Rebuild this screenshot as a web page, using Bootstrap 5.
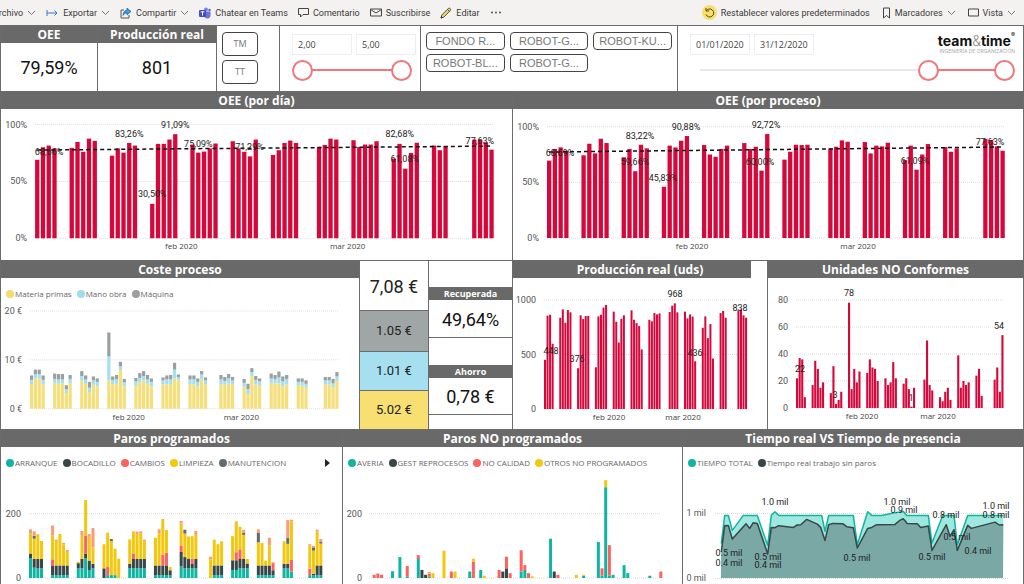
<!DOCTYPE html>
<html lang="es">
<head>
<meta charset="utf-8">
<meta name="viewport" content="width=device-width, initial-scale=1">
<title>Cuadro de mando OEE</title>
<link href="https://cdn.jsdelivr.net/npm/bootstrap@5.3.0/dist/css/bootstrap.min.css" rel="stylesheet">
<style>
:root{--edge:#6b6b6b;--coral:#f0777a;--ui:"Open Sans","Noto Sans",sans-serif;--din:Roboto,"Liberation Sans",sans-serif}
body{font-family:var(--ui);font-size:9px;line-height:12px;color:#333;background:#fff;height:100vh;overflow:hidden}
.toolbar{background:#f3f2f1;height:25px;color:#333}
.tool{font-family:var(--din);font-size:9px;line-height:12px;color:#3b3a39;background:none;border:0;padding:0;display:flex;align-items:center;gap:4px;white-space:nowrap}
.tool svg{flex:none}
.tools{gap:10px}
.tools-end{gap:12px}
.first-tool{margin-left:-7px}
.board{border-right:1px solid var(--edge);border-left:1px solid var(--edge)}
.band{display:grid;border-top:1px solid var(--edge)}
.band>*+*{border-left:1px solid var(--edge)}
.filters{grid-template-columns:96fr 119fr 63fr 141fr 257fr 346fr;height:66px}
.halves{grid-template-columns:511fr 511fr}
.mixed{grid-template-columns:358fr 69fr 84fr 255fr 256fr}
.thirds{grid-template-columns:341fr 340fr 341fr}
.band>*{min-width:0}
.head{background:#696969;color:#fff;font-weight:700;font-size:12px;line-height:17px;height:17px;margin:0;text-align:center;white-space:nowrap}
.head-sm{font-size:9px;line-height:13px;height:13px}
.kpi{font-family:var(--din);font-size:18px;line-height:24px;color:#111;text-align:center}
.kpi-tall{padding-top:13px}
.choice{border:1px solid #444;border-radius:4px;background:#fff;color:#777;padding:0;text-align:center;white-space:nowrap}
.choices{padding:6px 5px;gap:4px}
.choice-unit{width:36px;height:24px;font-size:9px}
.choice-robot{height:18px;font:11px/14px "Liberation Sans",sans-serif}
.robots{display:grid;grid-template-columns:repeat(3,1fr);gap:4px 5px;padding:6px 5px}
.field{border:1px solid #eee;width:60px;height:21px;font-size:9px;color:#444;padding:0 5px;background:#fff}
.dual{position:relative;height:22px}
.dual .rail{position:absolute;left:10px;right:10px;top:10px;height:2px;background:#e8e8e8}
.dual .rail span{display:block;height:2px;margin-left:auto;background:var(--coral)}
.dual input{position:absolute;left:0;top:0;width:100%;height:22px;margin:0;appearance:none;background:none;pointer-events:none}
.dual input::-webkit-slider-thumb{appearance:none;pointer-events:auto;width:21px;height:21px;border-radius:50%;border:2px solid var(--coral);background:#fff}
.brand{font:700 14px/14px Inter,sans-serif;color:#111;text-align:right}
.brand i{font-style:normal;font-weight:300;color:#888}
.brand sup{font-size:6px;font-weight:400;top:-9px}
.tagline{font:5px/6px Inter,sans-serif;color:#aaa;text-align:right}
.plot{display:block;width:100%;height:auto;overflow:visible}
.plot text{font-family:var(--ui);font-size:8px;fill:#444}
.plot .num{font-family:var(--din);font-size:9px;fill:#222}
.plot .axis{font-family:var(--din);font-size:9px;fill:#555}
.legend-row{height:30px;padding-left:5px;padding-top:1px;gap:5px;color:#666;font-size:8px;white-space:nowrap;padding-right:12px}
.legend-row span{display:flex;align-items:center;gap:1px}
.legend-row b{width:8px;height:8px;border-radius:50%}
.costs{display:grid;grid-template-rows:49fr 41fr 39fr 39fr;font-family:var(--din);color:#222;text-align:center}
.costs>div{display:flex;align-items:center;justify-content:center;font-size:13px}
.costs>div+div{border-top:1px solid var(--edge)}
.costs>.sum{font-size:18px;padding-top:2px}
.saving{display:grid;grid-template-rows:26px 13px 38px 27px 13px 37px 1fr}
.saving .kpi{border-bottom:1px solid var(--edge);display:flex;align-items:center;justify-content:center;padding-top:2px}
</style>
</head>
<body>
<nav class="toolbar d-flex align-items-center justify-content-between" aria-label="Acciones del informe">
  <div class="tools d-flex align-items-center">
    <button class="tool first-tool">Archivo <svg width="9" height="6" viewBox="0 0 9 6"><path d="M1 1l3.500 3.500L8 1" fill="none" stroke="#777"/></svg></button>
    <button class="tool"><svg width="13" height="10" viewBox="0 0 13 10"><path d="M1 2v6M1 5h10M8.500 2.500L11 5 8.500 7.500" fill="none" stroke="#2b7cc4"/></svg>Exportar <svg width="9" height="6" viewBox="0 0 9 6"><path d="M1 1l3.500 3.500L8 1" fill="none" stroke="#777"/></svg></button>
    <button class="tool"><svg width="12" height="12" viewBox="0 0 12 12"><path d="M4 3H1v8h8V8" fill="none" stroke="#555"/><path d="M7 1l4 3.500L7 8V6C5 6 4 7 3 8.500 3 5 5 3.200 7 3z" fill="#3f97dc" stroke="#1868ae" stroke-width=".7"/></svg>Compartir <svg width="9" height="6" viewBox="0 0 9 6"><path d="M1 1l3.500 3.500L8 1" fill="none" stroke="#777"/></svg></button>
    <button class="tool"><svg width="12" height="12" viewBox="0 0 12 12"><circle cx="7" cy="2.500" r="2" fill="#7b83eb"/><circle cx="10.500" cy="3" r="1.200" fill="#5059c9"/><path d="M5 4.500h6.500V8c0 2-1 3.500-3 3.500S5 10 5 8z" fill="#6b73dd"/><rect y="3" width="7" height="7" rx="1" fill="#464eb8"/><path d="M1.700 4.800h3.600M3.500 4.800v3.700" stroke="#fff"/></svg>Chatear en Teams</button>
    <button class="tool"><svg width="11" height="11" viewBox="0 0 11 11"><path d="M.5 1.500h10v6H5L2.500 10V7.500h-2z" fill="none" stroke="#444"/></svg>Comentario</button>
    <button class="tool"><svg width="12" height="9" viewBox="0 0 12 9"><path d="M.5 1h11v7H.5zM.5 1.500L6 5l5.500-3.500" fill="none" stroke="#444"/></svg>Suscribirse</button>
    <button class="tool"><svg width="12" height="12" viewBox="0 0 12 12"><path d="M1 11l.8-3L8.500 1.300c1-.8 2.700.8 2 1.900L4 10z" fill="#f0d66a" stroke="#444" stroke-width=".9"/><path d="M7.500 2.500l2 2M1 11l1.500-.4-1-1z" stroke="#333" fill="#333" stroke-width=".8"/></svg>Editar</button>
    <button class="tool" aria-label="Más opciones"><svg width="12" height="3" viewBox="0 0 12 3"><g fill="#444"><circle cx="2" cy="1.500" r=".9"/><circle cx="6" cy="1.500" r=".9"/><circle cx="10" cy="1.500" r=".9"/></g></svg></button>
  </div>
  <div class="tools-end d-flex align-items-center pe-2">
    <button class="tool"><svg width="15" height="15" viewBox="0 0 15 15"><circle cx="7.500" cy="7.500" r="7.500" fill="#f7df6e"/><path d="M4 3v3h3M4.200 6A4 4 0 1 1 4 9.500" fill="none" stroke="#5b4b14"/></svg>Restablecer valores predeterminados</button>
    <button class="tool"><svg width="9" height="12" viewBox="0 0 9 12"><path d="M1.500 1h6v10l-3-2.500-3 2.500z" fill="none" stroke="#444"/></svg>Marcadores <svg width="9" height="6" viewBox="0 0 9 6"><path d="M1 1l3.500 3.500L8 1" fill="none" stroke="#777"/></svg></button>
    <button class="tool"><svg width="11" height="9" viewBox="0 0 11 9"><path d="M.5 1h10v7H.5z" fill="none" stroke="#444"/></svg>Vista <svg width="9" height="6" viewBox="0 0 9 6"><path d="M1 1l3.500 3.500L8 1" fill="none" stroke="#777"/></svg></button>
  </div>
</nav>

<main class="board">
  <section class="band filters">
    <div><h2 class="head">OEE</h2><div class="kpi kpi-tall">79,59%</div></div>
    <div><h2 class="head">Producción real</h2><div class="kpi kpi-tall">801</div></div>
    <div class="choices d-flex flex-column"><button class="choice choice-unit">TM</button><button class="choice choice-unit">TT</button></div>
    <div class="px-2 pt-2 d-flex flex-column gap-1">
      <div class="d-flex gap-1 ps-1"><input class="field" aria-label="Mínimo" value="2,00"><input class="field" aria-label="Máximo" value="5,00"></div>
      <div class="dual ms-1"><div class="rail"><span></span></div><input type="range" aria-label="Desde" value="0"><input type="range" aria-label="Hasta" value="100"></div>
    </div>
    <div><div class="robots"><button class="choice choice-robot">FONDO R...</button><button class="choice choice-robot">ROBOT-G...</button><button class="choice choice-robot">ROBOT-KU...</button><button class="choice choice-robot">ROBOT-BL...</button><button class="choice choice-robot">ROBOT-G...</button></div></div>
    <div class="px-2 pt-2 d-flex flex-column gap-1">
      <div class="d-flex gap-1 ps-1"><input class="field" aria-label="Fecha inicial" value="01/01/2020"><input class="field" aria-label="Fecha final" value="31/12/2020">
        <div class="ms-auto"><div class="brand">team<i>&amp;</i>time<sup>®</sup></div><div class="tagline">INGENIERÍA DE ORGANIZACIÓN</div></div></div>
      <div class="dual ms-1"><div class="rail"><span class="w-25"></span></div><input type="range" aria-label="Fecha desde" value="75"><input type="range" aria-label="Fecha hasta" value="100"></div>
    </div>
  </section>

  <section class="band halves">
    <div><h2 class="head">OEE (por día)</h2><svg class="plot" id="oeeDay" viewBox="0 0 510 151"></svg></div>
    <div><h2 class="head">OEE (por proceso)</h2><svg class="plot" id="oeeProc" viewBox="0 0 510 151"></svg></div>
  </section>

  <section class="band mixed">
    <div><h2 class="head">Coste proceso</h2>
      <div class="legend-row d-flex align-items-center"><span><b style="background:#f5db6b"></b>Materia primas</span><span><b style="background:#9fdcee"></b>Mano obra</span><span><b style="background:#9a9f9f"></b>Máquina</span></div>
      <svg class="plot" id="cost" viewBox="0 0 359 121"></svg></div>
    <div class="costs"><div class="sum">7,08 €</div><div style="background:#a0a6a6">1.05 €</div><div style="background:#a5dff0">1.01 €</div><div style="background:#f7df72">5.02 €</div></div>
    <div class="saving"><span></span><h2 class="head head-sm">Recuperada</h2><div class="kpi">49,64%</div><span></span><h2 class="head head-sm">Ahorro</h2><div class="kpi">0,78 €</div></div>
    <div><h2 class="head me-3 ps-3">Producción real (uds)</h2><svg class="plot" id="units" viewBox="0 0 254 151"></svg></div>
    <div><h2 class="head">Unidades NO Conformes</h2><svg class="plot" id="rejects" viewBox="0 0 255 151"></svg></div>
  </section>

  <section class="band thirds">
    <div><h2 class="head">Paros programados</h2>
      <div class="legend-row d-flex align-items-center"><span><b style="background:#10b5a2"></b>ARRANQUE</span><span><b style="background:#374649"></b>BOCADILLO</span><span><b style="background:#fd625e"></b>CAMBIOS</span><span><b style="background:#f2c80f"></b>LIMPIEZA</span><span><b style="background:#5f6b6d"></b>MANUTENCION</span><svg class="ms-auto flex-shrink-0" width="6" height="8" viewBox="0 0 6 8"><path d="M1 0l5 4-5 4z" fill="#222"/></svg></div>
      <svg class="plot" id="planned" viewBox="0 0 341 120"></svg></div>
    <div><h2 class="head">Paros NO programados</h2>
      <div class="legend-row d-flex align-items-center"><span><b style="background:#10b5a2"></b>AVERIA</span><span><b style="background:#374649"></b>GEST REPROCESOS</span><span><b style="background:#fd625e"></b>NO CALIDAD</span><span><b style="background:#f2c80f"></b>OTROS NO PROGRAMADOS</span></div>
      <svg class="plot" id="unplanned" viewBox="0 0 339 120"></svg></div>
    <div><h2 class="head">Tiempo real VS Tiempo de presencia</h2>
      <div class="legend-row d-flex align-items-center"><span><b style="background:#10b5a2"></b>TIEMPO TOTAL</span><span><b style="background:#374649"></b>Tiempo real trabajo sin paros</span></div>
      <svg class="plot" id="time" viewBox="0 0 340 120"></svg></div>
  </section>
</main>

<script src="https://cdn.jsdelivr.net/npm/bootstrap@5.3.0/dist/js/bootstrap.bundle.min.js"></script>
<script>
// Day index of the first bar of every working week
const weeks=[0,6,13,20,27,34,41,49,55,62,69,76];
const text=(x,y,s,cls='num',anchor='middle')=>`<text x="${x}" y="${y}" class="${cls}" text-anchor="${anchor}">${s}</text>`;
const byWeek=data=>data.flatMap((w,i)=>w.map((v,j)=>[weeks[i]+j,v]));
// c: x0, step, bar, base, scale, right, ticks, colors, bars, months, labels, trend
function bars(id,c){
  let s='';
  for(const [v,name] of c.ticks){
    const y=c.base-v*c.scale;
    s+=`<line x1="${c.x0}" x2="${c.right}" y1="${y}" y2="${y}" stroke="#ddd" stroke-dasharray="1 1"/>`+text(c.axis,y+3,name,'axis',c.anchor||'end');
  }
  for(const [slot,value] of c.bars){
    let y=c.base;
    [].concat(value).forEach((v,k)=>{const h=v*c.scale;y-=h;if(h)s+=`<rect x="${c.x0+slot*c.step}" y="${y}" width="${c.bar}" height="${h}" fill="${c.colors[k]}"/>`});
  }
  if(c.trend)s+=`<line x1="${c.x0+2}" x2="${c.right}" y1="${c.trend[0]}" y2="${c.trend[1]}" stroke="#111" stroke-width="1.500" stroke-dasharray="4 3"/>`;
  for(const [x,y,t] of c.labels||[])s+=text(x,y,t);
  for(const [x,t] of c.months)s+=text(x,c.base+11,t,'');
  document.getElementById(id).innerHTML=s;
}
const red=['#d6083b'];
bars('oeeDay',{x0:34,step:5.74,bar:4.3,base:129,scale:1.135,right:491,axis:26,trend:[41,37],colors:red,
 ticks:[[0,'0%'],[50,'50%'],[100,'100%']],months:[[180,'feb 2020'],[346,'mar 2020']],
 labels:[[48,46,'68,66%'],[128,28,'83,26%'],[174,19,'91,09%'],[151,88,'30,50%'],[197,38,'75,09%'],[248,41,'71,29%'],[398,28,'82,68%'],[403,53,'61,08%'],[478,35,'77,63%']],
 bars:byWeek([[69,80,81.5,79],[79.4,84.7,76,87.6,85.6],[72.6,79,75.3,83.8,81.5],[30.3,83,83,86.8,91.5],[82.4,75.3,76.2,79,83.3],[85.3,79,76,72,86.8],[73.2,77.4,83.8,85.9,83.8],[80.3,82,87.6,86.8],[86.2,80.3,82.4,82.4,85.3],[70,83,61.2,75,84],[81.5,77.4,81],[86.8,86.8,84.4,77.9]])});
bars('oeeProc',{x0:34,step:5.74,bar:4.3,base:129,scale:1.113,right:491,axis:26,trend:[43,38],colors:red,
 ticks:[[0,'0%'],[50,'50%'],[100,'100%']],months:[[179,'feb 2020'],[345,'mar 2020']],
 labels:[[47,47,'68,69%'],[127,30,'83,22%'],[122,56,'59,66%'],[173,21,'90,88%'],[150,72,'45,83%'],[253,19,'92,72%'],[247,56,'60,00%'],[402,55,'61,09%'],[477,36,'77,63%']],
 bars:byWeek([[69.5,80,81.4,78.4],[74.3,84.7,76,89.2,85.3],[72.5,80,60,83.8,80.5],[46,83,81.4,87.4,91.6],[83.5,75,73,80,83],[85.3,80,82,60.5,93.4],[70.4,77.5,83.8,83.5,83.8],[80.5,82,87.7,86.5],[86.2,76,83,82.3,85.6],[70,83,61.4,75,84.4],[81.7,77.5,80.5],[89,88,82.3,78.4]])});
bars('cost',{x0:29,step:3.877,bar:3.2,base:101,scale:4.9,right:338,axis:21,colors:['#f5df7a','#a5dff0','#9a9f9f'],
 ticks:[[0,'0 €'],[10,'10 €'],[20,'20 €']],months:[[128,'feb 2020'],[241,'mar 2020']],
 bars:byWeek([[[5,.9,.9],[6.2,.9,.9],[6.2,.9,.9],[5,.9,.9]],[[5.3,.8,1.1],[5.2,.8,1.1],[5.2,.8,1.1],[3.2,.8,.8],[5.2,.9,.8]],[[5.8,.9,1],[5.1,.9,.8],[3.3,1,1.2],[4.9,.9,.8],[4.6,.9,.7]],[[5.8,4.9,4.9],[5,.9,.7],[5.1,1,.8],[7.9,.8,.9],[4.6,.8,.7]],[[4.7,.9,.7],[5.4,.9,1],[5.8,.9,1],[5.1,.9,.9],[4.6,.9,.7]],[[5,.8,.6],[5,1,.8],[5,1,.9],[6.2,1.8,1.4],[6,.5,.5]],[[5,1,.8],[5,1,.8],[4.6,.9,.7],[6,1,.7],[5,.8,.6]],[[5,1,.9],[4.9,.8,.8],[5.2,1,.9],[5,.8,.7]],[[4.5,.8,.8],[3,1,1.1],[6.6,.9,.8],[5,.9,.8],[4.7,.9,.6]],[[5.3,.9,1],[5.2,.9,.8],[5.2,1.2,1.2],[4.6,1,1],[5,1.1,.8]],[[4.7,.8,.7],[4.7,.8,.7],[4.3,.8,.7]],[[5,.8,.7],[5,.8,.7],[4.4,.8,.9],[5.7,.9,.9]]])});
bars('units',{x0:31,step:2.545,bar:2,base:131,scale:.109,right:235,axis:23,colors:red,
 ticks:[[0,'0'],[500,'500'],[1000,'1000']],months:[[96,'feb 2020'],[170,'mar 2020']],
 labels:[[38,76,'448'],[64,84,'376'],[162,19,'968'],[182,78,'436'],[227,33,'838']],
 bars:byWeek([[451,856,865,598],[837,914,791,908,887],[374,859,825,853,853],[383,850,865,930,954],[893,800,610,828,859],[905,819,788,761,546],[819,804,880,868,877],[890,948,969,887],[893,831,868,847,438],[745,850,650,779,463],[880,899,837],[905,914,859,837]])});
bars('rejects',{x0:28,step:2.6,bar:2.1,base:130,scale:1.35,right:236,axis:20,colors:red,
 ticks:[[0,'0'],[20,'20'],[40,'40'],[60,'60'],[80,'80']],months:[[94,'feb 2020'],[170,'mar 2020']],
 labels:[[32,94,'22'],[67,120,'3'],[81,18,'78'],[143,123,'1'],[231,51,'54']],
 bars:byWeek([[22,37,36,8],[17,35,29,15,19],[11,31,3,6,12],[78,14,29,19,27],[26,36,30,29,20],[22,17,19,34,22],[18,22,14,1,15],[21,50,17,13],[8,5,12,15,6],[39,15,20,17,19],[24,29,9],[21,30,12,54]])});
const stops=['#10b5a2','#374649','#fd625e','#f2c80f','#5f6b6d','#fd9a72'];
bars('planned',{x0:28,step:3.675,bar:3,base:101,scale:.322,right:320,axis:20,colors:stops,
 ticks:[[0,'0'],[200,'200']],months:[[121,'feb 2020'],[228,'mar 2020']],
 bars:byWeek([[[62,14,0,62,0,13],[32,28,0,62,9,14],[30,29,0,77],[30,29,0,56]],[[9,30,19,74,0,31],[9,30,0,76,0,4],[9,30,0,98],[9,30,0,65,0,5],[9,30,0,42,0,6]],[[30,16,0,4],[30,29,0,72,0,15],[61,15,56,110],[25,29,0,74,0,8],[30,14,0,51,0,60]],[[0,30,0,75],[9,0,25,107],[9,0,0,106,6],[9,0,0,82],[0,0,0,60]],[[30,14,0,76],[30,29,17,69],[30,29,0,77,0,8],[30,29,0,80,0,6],[30,29,0,55,0,5]],[[9,30,0,86],[9,30,0,100,0,12],[9,30,34,110],[9,30,40,70],[9,15,0,10]],[[36,45,20,68,0,8],[30,35,0,73,12],[30,29,0,70],[30,15,15,70],[30,29,0,75,0,12]],[[0,0,0,58,0,8],[9,30,0,80],[9,30,0,66],[9,30,0,75]],[[25,30,0,75],[25,30,25,96],[30,29,30,70],[30,29,0,75,6,9],[30,15,0,14]],[[9,30,0,72,30,10],[9,30,0,70],[9,30,0,15],[9,30,0,62,0,24],[9,15,22,0,0,3]],[[30,14,0,70],[30,14,0,62,18,56],[20,0,36,120,0,5]],[[9,0,20,72,0,4],[9,4,0,72,10,5],[9,30,0,105,0,6],[9,30,0,68,6,8]]])});
bars('unplanned',{x0:26,step:3.675,bar:3,base:101,scale:.322,right:318,axis:19,colors:stops,
 ticks:[[0,'0'],[200,'200']],months:[[120,'feb 2020'],[227,'mar 2020']],
 bars:[[1,[0,0,10]],[2,[0,0,14]],[3,[0,0,10]],[6,21],[8,65],[10,[5,0,32]],[13,[58,3,10]],[14,[0,25]],[15,[0,10]],[16,[4,0,10,5]],[17,[0,0,0,15]],[20,[0,0,0,85]],[22,[0,0,20]],[23,[0,0,0,20]],[27,20],[28,[0,0,50,10]],[30,25],[31,[0,0,0,7]],[35,[0,0,25]],[36,[0,20]],[37,[0,30,36]],[38,[0,0,15]],[41,[20,0,66]],[42,[25,0,15]],[43,[0,0,15]],[44,[0,0,0,5]],[49,122],[50,[0,20]],[51,[0,0,10]],[56,[0,0,0,10]],[58,[7,0,0,3]],[62,112],[63,[8,0,22]],[64,[282,0,0,22]],[65,[8,0,94]],[66,10],[69,40],[70,15],[76,7],[79,[0,0,20]]]});

// Presence time against working time, as [position on the time axis, minutes]
const total=[[124,531],[134,969],[145,969],[157,737],[190,969],[232,969],[263,505],[274,969],[285,1026],[296,969],[425,969],[435,722],[446,969],[520,969],[532,515],[563,1026],[575,969],[605,969],[640,1005],[670,1031],[680,969],[745,969],[756,541],[788,969],[822,969],[832,515],[863,969],[970,969]];
const real=[[124,402],[134,809],[145,814],[157,603],[198,840],[209,768],[220,856],[232,845],[263,371],[274,783],[285,778],[296,809],[340,783],[352,820],[362,825],[380,907],[412,835],[422,783],[435,582],[446,825],[458,845],[488,840],[500,794],[520,778],[532,464],[563,768],[575,783],[590,825],[645,830],[658,887],[670,918],[682,845],[712,840],[722,783],[745,804],[756,428],[799,825],[810,644],[822,747],[832,428],[863,814],[874,768],[945,866],[958,820],[970,825]];
const line=p=>p.map(([x,v])=>`${(x/3-3).toFixed(1)},${(101-v*.0646).toFixed(1)}`).join(' ');
const area=(p,fill)=>`<polygon points="38,101 ${line(p)} 320,101" fill="${fill}"/>`;
const stroke=(p,color)=>`<polyline points="${line(p)}" fill="none" stroke="${color}" stroke-width="1.500" stroke-linejoin="round"/>`;
document.getElementById('time').innerHTML=
 '<path d="M32 36.500H325M32 101.500H325" stroke="#ddd" stroke-dasharray="1 1"/>'+text(23,39,'1 mil','axis','end')+text(23,104,'0 mil','axis','end')+
 area(total,'#9fe8df')+area(real,'#79a8a5')+stroke(total,'#10b5a2')+stroke(real,'#374649')+
 [[46,79,'0.5 mil'],[46,89,'0.4 mil'],[92,28,'1.0 mil'],[85,83,'0.5 mil'],[85,91,'0.4 mil'],[174,84,'0.5 mil'],[214,28,'1.0 mil'],[221,36,'0.9 mil'],[249,83,'0.5 mil'],[263,41,'0.8 mil'],[274,63,'0.5 mil'],[295,77,'0.4 mil'],[313,32,'1.0 mil'],[313,41,'0.8 mil']].map(l=>text(...l)).join('')+
 text(128,112,'feb 2020','')+text(239,112,'mar 2020','');
</script>
</body>
</html>
